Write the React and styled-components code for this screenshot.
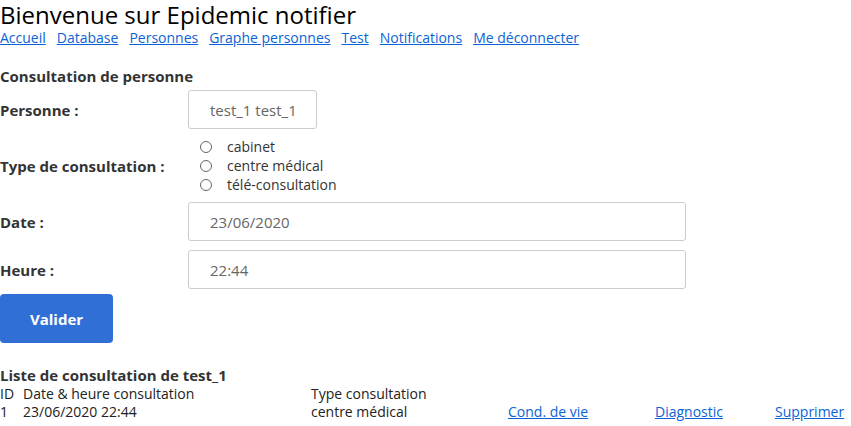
import React from 'react';
import styled, { createGlobalStyle } from 'styled-components';

const GlobalStyle = createGlobalStyle`
  body {
    margin: 0;
    background: #ffffff;
    font-family: 'Open Sans', 'Liberation Sans', sans-serif;
    color: #222;
  }
`;

const Page = styled.div`
  padding: 0;
`;

const Title = styled.h1`
  margin: 0;
  font-size: 24px;
  font-weight: 400;
  line-height: 30px;
  color: #000;
`;

const Nav = styled.nav`
  display: flex;
  gap: 11px;
  font-size: 14px;
  line-height: 16px;
`;

const NavLink = styled.a`
  color: #0b63d6;
  text-decoration: underline;
`;

const SectionTitle = styled.div`
  font-size: 15px;
  font-weight: 700;
  color: #333;
  line-height: 20px;
  margin-top: ${(p) => p.$top || 0}px;
`;

const FormRow = styled.div`
  display: grid;
  grid-template-columns: 188px 1fr;
  align-items: center;
  margin-top: ${(p) => p.$top || 0}px;
`;

const Label = styled.label`
  font-size: 15px;
  font-weight: 700;
  color: #333;
`;

const Field = styled.div`
  box-sizing: border-box;
  width: ${(p) => p.$width}px;
  height: 39px;
  border: 1px solid #ccc;
  border-radius: 3px;
  padding: 0 0 0 21px;
  display: flex;
  align-items: center;
  white-space: nowrap;
  font-size: 15px;
  color: #666;
  background: #fff;
`;

const RadioList = styled.div`
  display: flex;
  flex-direction: column;
  padding-left: 12px;
`;

const RadioOption = styled.label`
  display: flex;
  align-items: center;
  gap: 15px;
  font-size: 14px;
  color: #333;
  line-height: 19px;
`;

const RadioCircle = styled.span`
  box-sizing: border-box;
  width: 12px;
  height: 12px;
  border: 1px solid #666;
  border-radius: 50%;
`;

const SubmitButton = styled.button`
  display: block;
  width: 113px;
  height: 49px;
  margin-top: 5px;
  border: none;
  border-radius: 4px;
  background: #2f6fd6;
  color: #fff;
  font-family: inherit;
  font-size: 15px;
  font-weight: 700;
`;

const Table = styled.div`
  display: grid;
  grid-template-columns: 23px 288px 197px 147px 120px auto;
  font-size: 14px;
  line-height: 18px;
  color: #222;
`;

const Cell = styled.div`
  white-space: nowrap;
`;

const TableLink = styled.a`
  color: #0b63d6;
  text-decoration: underline;
`;

const navItems = [
  'Accueil',
  'Database',
  'Personnes',
  'Graphe personnes',
  'Test',
  'Notifications',
  'Me déconnecter',
];

const types = ['cabinet', 'centre médical', 'télé-consultation'];

export default function App() {
  return (
    <Page>
      <GlobalStyle />
      <Title>Bienvenue sur Epidemic notifier</Title>
      <Nav>
        {navItems.map((item) => (
          <NavLink key={item} href="#">
            {item}
          </NavLink>
        ))}
      </Nav>

      <SectionTitle $top={20}>Consultation de personne</SectionTitle>

      <FormRow $top={4}>
        <Label>Personne :</Label>
        <Field $width={129}>test_1 test_1</Field>
      </FormRow>

      <FormRow $top={8}>
        <Label>Type de consultation :</Label>
        <RadioList>
          {types.map((t) => (
            <RadioOption key={t}>
              <RadioCircle />
              {t}
            </RadioOption>
          ))}
        </RadioList>
      </FormRow>

      <FormRow $top={8}>
        <Label>Date :</Label>
        <Field $width={498}>23/06/2020</Field>
      </FormRow>

      <FormRow $top={9}>
        <Label>Heure :</Label>
        <Field $width={498}>22:44</Field>
      </FormRow>

      <SubmitButton>Valider</SubmitButton>

      <SectionTitle $top={22}>Liste de consultation de test_1</SectionTitle>
      <Table>
        <Cell>ID</Cell>
        <Cell>Date &amp; heure consultation</Cell>
        <Cell>Type consultation</Cell>
        <Cell />
        <Cell />
        <Cell />
        <Cell>1</Cell>
        <Cell>23/06/2020 22:44</Cell>
        <Cell>centre médical</Cell>
        <Cell>
          <TableLink href="#">Cond. de vie</TableLink>
        </Cell>
        <Cell>
          <TableLink href="#">Diagnostic</TableLink>
        </Cell>
        <Cell>
          <TableLink href="#">Supprimer</TableLink>
        </Cell>
      </Table>
    </Page>
  );
}
